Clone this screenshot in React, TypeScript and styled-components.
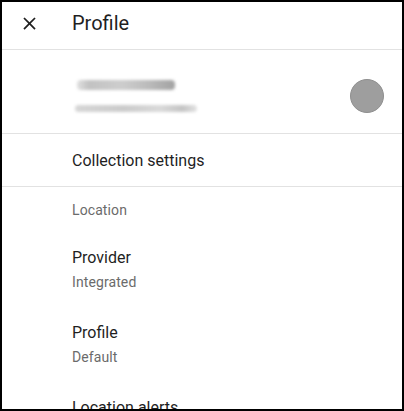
import React from "react";
import styled, { createGlobalStyle } from "styled-components";

const GlobalStyle = createGlobalStyle`
  html, body { margin: 0; padding: 0; background: #ffffff; }
  body { font-family: Roboto, "Noto Sans", "Liberation Sans", sans-serif; }
  * { box-sizing: border-box; }
`;

const Frame = styled.div`
  width: 404px;
  height: 411px;
  border: 2px solid #000;
  background: #fff;
  overflow: hidden;
  display: flex;
  flex-direction: column;
  color: #1f1f1f;
`;

const Header = styled.header`
  height: 48px;
  flex: none;
  display: flex;
  align-items: flex-start;
  padding: 9px 0 0 15.5px;
  border-bottom: 1px solid #e2e2e2;
`;

const IconButton = styled.button`
  width: 24px;
  height: 24px;
  padding: 0;
  border: none;
  background: none;
  display: flex;
  align-items: center;
  justify-content: center;
  color: #1f1f1f;
`;

const Title = styled.h1`
  margin: 0 0 0 30.5px;
  font-size: 20px;
  line-height: 24px;
  font-weight: 400;
  color: #1f1f1f;
`;

const AccountRow = styled.div`
  height: 84px;
  flex: none;
  display: flex;
  align-items: center;
  justify-content: space-between;
  padding: 8px 18px 0 70px;
  border-bottom: 1px solid #e2e2e2;
`;

const AccountLines = styled.div`
  display: flex;
  flex-direction: column;
  gap: 15px;
`;

const BlurBar = styled.div<{ $w: number; $h: number; $x: number; $tone: "dark" | "light" }>`
  width: ${(p) => p.$w}px;
  height: ${(p) => p.$h}px;
  margin-left: ${(p) => p.$x}px;
  border-radius: 4px;
  filter: blur(1.5px);
  background: ${(p) =>
    p.$tone === "dark"
      ? "linear-gradient(90deg, #e0e0e0 0%, #c2c2c2 12%, #cdcdcd 45%, #bdbdbd 70%, #a2a2a2 100%)"
      : "linear-gradient(90deg, #d6d6d6 0%, #cbcbcb 40%, #d9d9d9 70%, #c4c4c4 88%, #e2e2e2 100%)"};
`;

const Avatar = styled.div`
  width: 34px;
  height: 34px;
  border-radius: 50%;
  background: #9e9e9e;
  border: 1px solid #8f8f8f;
`;

const NavRow = styled.div`
  height: 53px;
  flex: none;
  display: flex;
  align-items: center;
  padding: 2px 0 0 70px;
  border-bottom: 1px solid #e2e2e2;
  font-size: 16px;
  line-height: 24px;
`;

const Category = styled.div`
  padding: 13px 0 11px 70px;
  font-size: 14px;
  line-height: 20px;
  color: #6b6b6b;
  letter-spacing: 0.1px;
`;

const Pref = styled.div`
  height: 75px;
  flex: none;
  padding: 15px 0 0 70px;
  display: flex;
  flex-direction: column;
  gap: 2px;
`;

const PrefTitle = styled.div`
  font-size: 16px;
  line-height: 24px;
  color: #1f1f1f;
`;

const PrefSummary = styled.div`
  font-size: 14px;
  line-height: 20px;
  color: #6b6b6b;
  letter-spacing: 0.1px;
`;

const CloseIcon = () => (
  <svg width="21" height="21" viewBox="0 0 24 24" fill="currentColor">
    <path d="M19 6.41L17.59 5 12 10.59 6.41 5 5 6.41 10.59 12 5 17.59 6.41 19 12 13.41 17.59 19 19 17.59 13.41 12z" />
  </svg>
);

const prefs = [
  { title: "Provider", summary: "Integrated" },
  { title: "Profile", summary: "Default" },
  { title: "Location alerts", summary: "" },
];

export default function App() {
  return (
    <>
      <GlobalStyle />
      <Frame>
        <Header>
          <IconButton aria-label="Close">
            <CloseIcon />
          </IconButton>
          <Title>Profile</Title>
        </Header>
        <AccountRow>
          <AccountLines>
            <BlurBar $w={98} $h={10} $x={5} $tone="dark" />
            <BlurBar $w={122} $h={7} $x={3} $tone="light" />
          </AccountLines>
          <Avatar />
        </AccountRow>
        <NavRow>Collection settings</NavRow>
        <Category>Location</Category>
        {prefs.map((p) => (
          <Pref key={p.title}>
            <PrefTitle>{p.title}</PrefTitle>
            {p.summary && <PrefSummary>{p.summary}</PrefSummary>}
          </Pref>
        ))}
      </Frame>
    </>
  );
}
